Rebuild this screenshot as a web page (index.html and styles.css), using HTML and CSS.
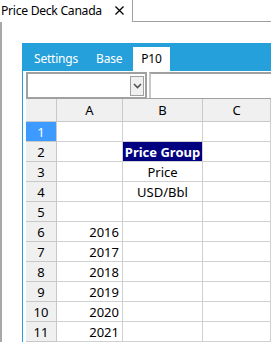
FILE: index.html
```html
<html>

<head>
    <link rel="stylesheet" href="styles.css">
</head>

<body>
    <div class="doc-tabs">
        <div class="doc-tab">
            <span class="doc-title">Price Deck Canada</span>
            <svg class="doc-close" width="9" height="9" viewBox="0 0 9 9">
                <path d="M0.5 0.5 L8.5 8.5 M8.5 0.5 L0.5 8.5" stroke="#000" stroke-width="1.3" />
            </svg>
        </div>
        <div class="doc-rest"></div>
    </div>
    <div class="panel">
        <div class="sheet">
            <div class="sheet-tabs">
                <div class="sheet-tab">Settings</div>
                <div class="sheet-tab">Base</div>
                <div class="sheet-tab active">P10</div>
            </div>
            <div class="sheet-body">
                <div class="formula-bar">
                    <div class="name-box">
                        <div class="drop-btn">
                            <svg width="9" height="6" viewBox="0 0 9 6">
                                <path d="M1 1 L4.5 4.5 L8 1" fill="none" stroke="#555" stroke-width="1.6" />
                            </svg>
                        </div>
                    </div>
                    <div class="formula-input"></div>
                </div>
                <div class="grid">
                    <div class="hd corner"></div>
                    <div class="hd">A</div>
                    <div class="hd">B</div>
                    <div class="hd">C</div>

                    <div class="rh selected">1</div><div class="c"></div><div class="c"></div><div class="c"></div>
                    <div class="rh">2</div><div class="c"></div><div class="c title">Price Group</div><div class="c"></div>
                    <div class="rh">3</div><div class="c"></div><div class="c mid">Price</div><div class="c"></div>
                    <div class="rh">4</div><div class="c"></div><div class="c mid">USD/Bbl</div><div class="c"></div>
                    <div class="rh">5</div><div class="c"></div><div class="c"></div><div class="c"></div>
                    <div class="rh">6</div><div class="c num">2016</div><div class="c"></div><div class="c"></div>
                    <div class="rh">7</div><div class="c num">2017</div><div class="c"></div><div class="c"></div>
                    <div class="rh">8</div><div class="c num">2018</div><div class="c"></div><div class="c"></div>
                    <div class="rh">9</div><div class="c num">2019</div><div class="c"></div><div class="c"></div>
                    <div class="rh">10</div><div class="c num">2020</div><div class="c"></div><div class="c"></div>
                    <div class="rh">11</div><div class="c num">2021</div><div class="c"></div><div class="c"></div>
                </div>
            </div>
        </div>
    </div>
</body>

</html>
```

FILE: styles.css
```css
body {
    margin: 0;
    font-family: "Noto Sans", "Open Sans", Arial, sans-serif;
    font-size: 12px;
    color: #000;
    background: #fff;
    overflow: hidden;
}

.doc-tabs {
    display: flex;
    height: 22px;
}

.doc-tab {
    width: 133px;
    flex-shrink: 0;
    display: flex;
    align-items: center;
    padding-left: 1px;
    border-right: 1px solid #a0a0a0;
    box-sizing: border-box;
}

.doc-title {
    font-size: 12.2px;
    letter-spacing: -0.3px;
    color: #000;
    white-space: nowrap;
    padding-bottom: 1px;
}

.doc-close {
    flex-shrink: 0;
    margin-left: auto;
    margin-right: 8px;
    margin-bottom: 2px;
}

.doc-rest {
    flex-grow: 1;
    border-bottom: 1px solid #a0a0a0;
}

.panel {
    border-left: 2px solid #a8a8a8;
    padding: 21px 0 0 20px;
    height: 320px;
    box-sizing: border-box;
}

.sheet {
    border-left: 1px solid #26a0da;
    height: 100%;
}

.sheet-tabs {
    display: flex;
    background: #26a0da;
    height: 28px;
    padding: 4px 0 0 2px;
    box-sizing: border-box;
}

.sheet-tab {
    color: #fff;
    padding: 0 9px;
    line-height: 23px;
    font-size: 12px;
    letter-spacing: -0.2px;
}

.sheet-tab.active {
    background: #fff;
    color: #000;
    margin-left: 2px;
    padding: 0 8px;
}

.sheet-body {
    padding-left: 3px;
}

.formula-bar {
    display: flex;
    height: 27px;
    padding-top: 1px;
    box-sizing: border-box;
}

.name-box {
    width: 121px;
    border: 2px solid #a0a0a0;
    border-bottom-width: 1px;
    box-sizing: border-box;
    display: flex;
    justify-content: flex-end;
    align-items: center;
    padding-right: 1px;
}

.drop-btn {
    width: 14px;
    height: 20px;
    border: 1px solid #a0a0a0;
    background: #f0f0f0;
    box-sizing: border-box;
    display: flex;
    align-items: center;
    justify-content: center;
}

.formula-input {
    flex-grow: 1;
    margin-left: 2px;
    border-top: 2px solid #a0a0a0;
    border-left: 2px solid #c8c8c8;
}

.grid {
    display: grid;
    grid-template-columns: 31px 66px 80px 68px;
    grid-template-rows: 23px repeat(11, 20px);
    border-top: 1px solid #a0a0a0;
    width: 245px;
}

.grid > div {
    border-right: 1px solid #d0d0d0;
    border-bottom: 1px solid #d0d0d0;
    box-sizing: border-box;
    display: flex;
    align-items: center;
    font-size: 13px;
    white-space: nowrap;
}

.grid .hd {
    background: #f0f0f0;
    justify-content: center;
    border-color: #c8c8c8;
}

.grid .rh {
    background: #f0f0f0;
    justify-content: center;
    border-color: #c8c8c8;
}

.grid .rh.selected {
    background: #3d9bff;
    color: #fff;
}

.grid .c.mid {
    justify-content: center;
}

.grid .c.num {
    justify-content: flex-end;
    padding-right: 3px;
}

.grid .c.title {
    background: #000080;
    color: #fff;
    font-weight: bold;
    justify-content: center;
}
```
